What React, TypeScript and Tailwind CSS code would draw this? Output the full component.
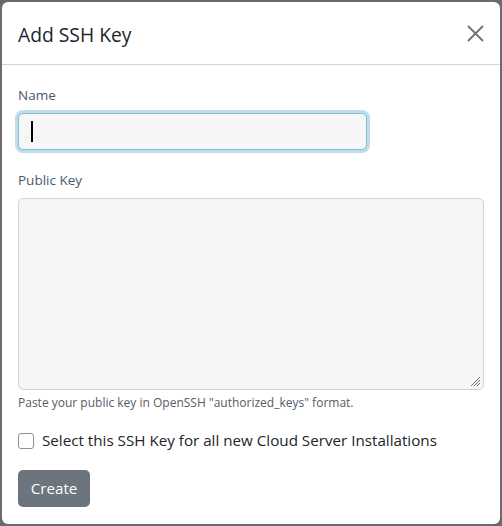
import React from 'react';

const App: React.FC = () => {
  return (
    <div className="w-[502px] h-[526px] bg-[#6b6b6b] p-[2px] overflow-hidden" style={{ fontFamily: '"Open Sans", "Noto Sans", sans-serif' }}>
      <div className="bg-white rounded-[6px] h-[522px] w-[498px] flex flex-col">
        {/* Header */}
        <div className="h-[63px] border-b border-[#cfd6de] flex items-center justify-between pl-[16px] pr-[16px]">
          <h2 className="text-[19.3px] text-[#212529] leading-none mt-[4px]">Add SSH Key</h2>
          <svg className="w-[17px] h-[17px] mt-[1px]" viewBox="0 0 17 17" fill="none" stroke="#727272" strokeWidth="1.8">
            <path d="M1 1 L16 16 M16 1 L1 16" />
          </svg>
        </div>

        {/* Body */}
        <div className="px-[16px] pt-[24px]">
          <label className="block text-[13.5px] text-[#495a6e] leading-none">Name</label>
          <div className="mt-[10.5px] w-[349px] h-[37px] rounded-[5px] border border-[#82bcdc] bg-[#f6f6f6] ring-[3px] ring-[#bfdeec] flex items-center pl-[12px]">
            <div className="w-[1.5px] h-[21px] bg-black" />
          </div>

          <label className="block mt-[24px] text-[13.5px] text-[#495a6e] leading-none">Public Key</label>
          <div className="relative mt-[10.5px] w-[466px] h-[192px] rounded-[5px] border border-[#cfd4d9] bg-[#f6f6f6]">
            <svg className="absolute right-[2px] bottom-[2px] w-[12px] h-[12px]" viewBox="0 0 12 12" stroke="#6b6b6b" strokeWidth="1">
              <path d="M11 2 L2 11 M11 5 L5 11 M11 8 L8 11" />
            </svg>
          </div>
          <p className="mt-[5px] text-[12px] leading-[16px] text-[#555d66]">Paste your public key in OpenSSH "authorized_keys" format.</p>

          <div className="mt-[19px] flex items-center gap-[8px] h-[21px]">
            <div className="w-[16px] h-[16px] rounded-[3px] border border-[#8a8f94] bg-white" />
            <span className="text-[15.2px] text-[#212529]">Select this SSH Key for all new Cloud Server Installations</span>
          </div>

          <button className="mt-[19px] h-[37px] w-[72px] rounded-[5px] bg-[#6c757d] text-white text-[15.2px]">Create</button>
        </div>
      </div>
    </div>
  );
};

export default App;
